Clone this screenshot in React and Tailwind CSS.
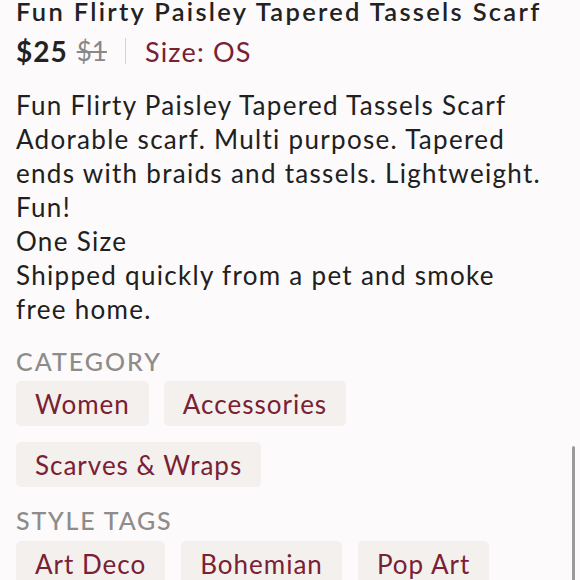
import React from "react";

const Chip = ({ children }) => (
  <div className="h-[45px] px-[19px] flex items-center rounded-[5px] bg-[#f3f0ee] text-[#7a2033] text-[26px] leading-none tracking-[1px]">
    {children}
  </div>
);

export default function App() {
  const font = { fontFamily: "Lato, 'Noto Sans', sans-serif" };
  return (
    <div className="relative w-[580px] h-[580px] overflow-hidden bg-[#fcfafa]" style={font}>
      <div className="px-4 -mt-[5px]">
        <div className="text-[25.5px] leading-[32px] font-semibold text-[#222] whitespace-nowrap tracking-[2.3px]">
          Fun Flirty Paisley Tapered Tassels Scarf
        </div>
        <div className="mt-[9px] flex items-center h-[30px]">
          <span className="text-[28px] font-bold text-[#222] leading-none tracking-[1px]">$25</span>
          <span className="ml-[9px] text-[26px] text-[#888] line-through leading-none">$1</span>
          <span className="ml-[18px] w-px h-[26px] bg-[#d6d3d1]"></span>
          <span className="ml-[19px] text-[27px] text-[#7a2033] leading-none tracking-[1.2px]">Size: OS</span>
        </div>
        <div className="mt-[22px] text-[26px] leading-[34px] text-[#202020] tracking-[1.3px] whitespace-nowrap">
          <div>Fun Flirty Paisley Tapered Tassels Scarf</div>
          <div>Adorable scarf. Multi purpose. Tapered</div>
          <div>ends with braids and tassels. Lightweight.</div>
          <div>Fun!</div>
          <div>One Size</div>
          <div>Shipped quickly from a pet and smoke</div>
          <div>free home.</div>
        </div>
        <div className="mt-[19px] text-[25px] leading-[32px] font-medium text-[#8e8c8a] tracking-[2px]">CATEGORY</div>
        <div className="mt-[4px] flex flex-wrap gap-x-[15px] gap-y-[16px]">
          <Chip>Women</Chip>
          <Chip>Accessories</Chip>
          <Chip>Scarves &amp; Wraps</Chip>
        </div>
        <div className="mt-[17px] text-[25px] leading-[32px] font-medium text-[#8e8c8a] tracking-[1.8px]">STYLE TAGS</div>
        <div className="mt-[5px] flex flex-wrap gap-x-[16px] gap-y-[16px]">
          <Chip>Art Deco</Chip>
          <Chip>Bohemian</Chip>
          <Chip>Pop Art</Chip>
        </div>
      </div>
      <div className="absolute right-[5px] top-[446px] w-[3px] h-[140px] rounded-full bg-[#9a9a9a]"></div>
    </div>
  );
}
